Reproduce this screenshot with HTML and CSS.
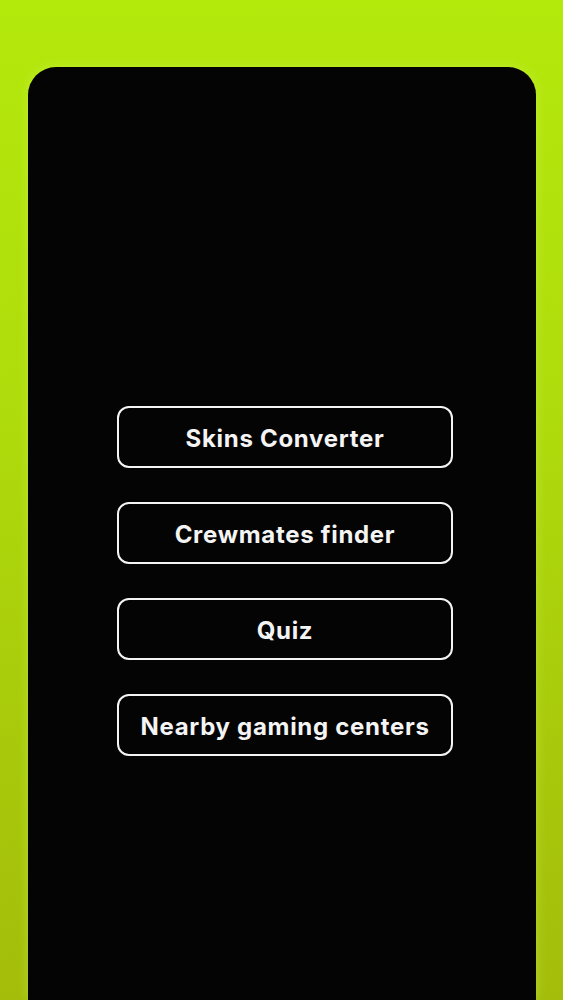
FILE: index.html
```html
<!DOCTYPE html>
<html>
<head>
<meta charset="utf-8">
<link rel="stylesheet" href="styles.css">
</head>
<body>
<div class="card">
  <div class="menu">
    <div class="btn">Skins Converter</div>
    <div class="btn">Crewmates finder</div>
    <div class="btn">Quiz</div>
    <div class="btn">Nearby gaming centers</div>
  </div>
</div>
</body>
</html>
```

FILE: styles.css
```css
html, body {
  margin: 0;
  padding: 0;
}
body {
  height: 1000px;
  overflow: hidden;
  background: linear-gradient(180deg, #b4e90c 0%, #afdc0c 40%, #a8c90b 75%, #a4bd0a 100%);
  font-family: Inter, "Noto Sans", sans-serif;
}
.card {
  margin: 67px 0 0 28px;
  width: 508px;
  height: 933px;
  background: #040404;
  border-radius: 28px 28px 0 0;
  box-shadow: 0 0 12px rgba(220, 255, 120, 0.35);
  box-sizing: border-box;
  padding: 339px 0 0 89px;
}
.menu {
  display: flex;
  flex-direction: column;
  gap: 34px;
  width: 336px;
}
.btn {
  height: 62px;
  box-sizing: border-box;
  border: 2.5px solid #f4f4f4;
  border-radius: 12px;
  display: flex;
  align-items: center;
  justify-content: center;
  color: #f4f4f4;
  font-size: 24px;
  font-weight: 700;
  letter-spacing: 0.7px;
  padding-top: 2px;
}
```
